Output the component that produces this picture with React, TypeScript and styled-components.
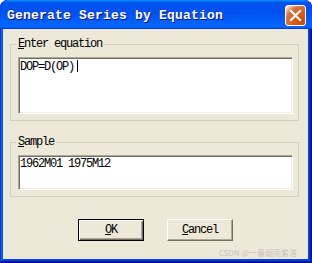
import styled, { createGlobalStyle } from "styled-components";

const GlobalStyle = createGlobalStyle`
  html, body {
    margin: 0;
    padding: 0;
    background: #ffffff;
  }
  body {
    font-family: "Liberation Mono", "DejaVu Sans Mono", monospace;
  }
`;

const App = () => {
  return (
    <>
      <GlobalStyle />
      <Window>
        <TitleBar>
          <Title>Generate Series by Equation</Title>
          <CloseButton aria-label="Close">
            <svg width="13" height="13" viewBox="0 0 13 13">
              <path
                d="M2 2 L11 11 M11 2 L2 11"
                stroke="#ffffff"
                strokeWidth="2.2"
                strokeLinecap="square"
              />
            </svg>
          </CloseButton>
        </TitleBar>
        <Body>
          <Group>
            <Legend>
              <u>E</u>nter equation
            </Legend>
            <EditBox $height={57}>
              DOP=D(OP)
              <Caret />
            </EditBox>
          </Group>
          <Group>
            <Legend>
              <u>S</u>ample
            </Legend>
            <EditBox $height={35}>1962M01 1975M12</EditBox>
          </Group>
          <ButtonRow>
            <Button $default>
              <u>O</u>K
            </Button>
            <Button>
              <u>C</u>ancel
            </Button>
          </ButtonRow>
        </Body>
        <Watermark>CSDN @一蓑烟雨紫洛</Watermark>
      </Window>
    </>
  );
};

export default App;

const Window = styled.div`
  position: relative;
  width: 312px;
  height: 263px;
  box-sizing: border-box;
  display: flex;
  flex-direction: column;
  background: #0843dc;
  border-radius: 8px 8px 0 0;
  box-shadow: inset -1px -1px #00138c, inset 1px 1px #0831d9,
    inset -2px -2px #001ea0, inset 2px 2px #166aee, inset -3px -3px #003bda,
    inset 3px 3px #0855dd;
  overflow: hidden;
`;

const TitleBar = styled.div`
  height: 29px;
  box-sizing: border-box;
  display: flex;
  align-items: center;
  justify-content: space-between;
  padding: 1px 6px 0 7px;
  border-radius: 8px 8px 0 0;
  background: linear-gradient(
    180deg,
    #0997ff,
    #0053ee 8%,
    #0050ee 40%,
    #0066ff 88%,
    #0066ff 93%,
    #005bff 95%,
    #003dd7 96%,
    #003dd7
  );
`;

const Title = styled.span`
  color: #ffffff;
  font-family: "Liberation Mono", monospace;
  font-weight: bold;
  font-size: 13px;
  letter-spacing: 0.2px;
  text-shadow: 1px 1px #0f1089;
`;

const CloseButton = styled.div`
  width: 21px;
  height: 21px;
  box-sizing: border-box;
  display: flex;
  align-items: center;
  justify-content: center;
  border: 1px solid #ffffff;
  border-radius: 3px;
  background: radial-gradient(
    circle at 90% 90%,
    #cc4600 0%,
    #dc6527 55%,
    #cd7546 70%,
    #ffccb2 90%,
    #ffffff 100%
  );
`;

const Body = styled.div`
  flex: 1;
  margin: 0 4px 4px 3px;
  padding-top: 9px;
  background: #ece9d8;
  display: flex;
  flex-direction: column;
`;

const Group = styled.fieldset`
  margin: 0 9px 0 7px;
  padding: 7px 5px 6px 7px;
  border: 1px solid #d0d0bf;
  min-width: 0;

  & + & {
    margin-top: 15px;
  }
`;

const Legend = styled.legend`
  margin-left: -2px;
  padding: 0 2px;
  font-size: 12px;
  line-height: 12px;
  letter-spacing: -1.2px;
  color: #000000;
`;

const EditBox = styled.div<{ $height: number }>`
  height: ${(p) => p.$height}px;
  box-sizing: border-box;
  padding: 2px 1px 0;
  background: #ffffff;
  border: 1px solid;
  border-color: #aca899 #ffffff #ffffff #aca899;
  box-shadow: inset 1px 1px #716f64, inset -1px -1px #f1efe2;
  font-size: 12px;
  line-height: 13px;
  letter-spacing: -1.2px;
  color: #000000;
  white-space: pre;
`;

const Caret = styled.span`
  display: inline-block;
  width: 1px;
  height: 12px;
  margin-left: 3px;
  vertical-align: -2px;
  background: #000000;
`;

const ButtonRow = styled.div`
  display: flex;
  justify-content: center;
  gap: 23px;
  margin-top: 22px;
`;

const Button = styled.button<{ $default?: boolean }>`
  width: 66px;
  height: 22px;
  box-sizing: border-box;
  padding: 0;
  background: #ece9d8;
  font-family: "Liberation Mono", monospace;
  font-size: 12px;
  letter-spacing: -1.2px;
  color: #000000;
  border: 1px solid;
  border-color: ${(p) =>
    p.$default ? "#000000" : "#ffffff #716f64 #716f64 #ffffff"};
  box-shadow: ${(p) =>
    p.$default
      ? "inset 1px 1px #ffffff, inset -1px -1px #716f64, inset -2px -2px #aca899"
      : "inset -1px -1px #aca899"};
`;

const Watermark = styled.div`
  position: absolute;
  right: 15px;
  bottom: 5px;
  font-family: "Noto Sans CJK SC", sans-serif;
  font-size: 8px;
  color: #c5c3b8;
`;
